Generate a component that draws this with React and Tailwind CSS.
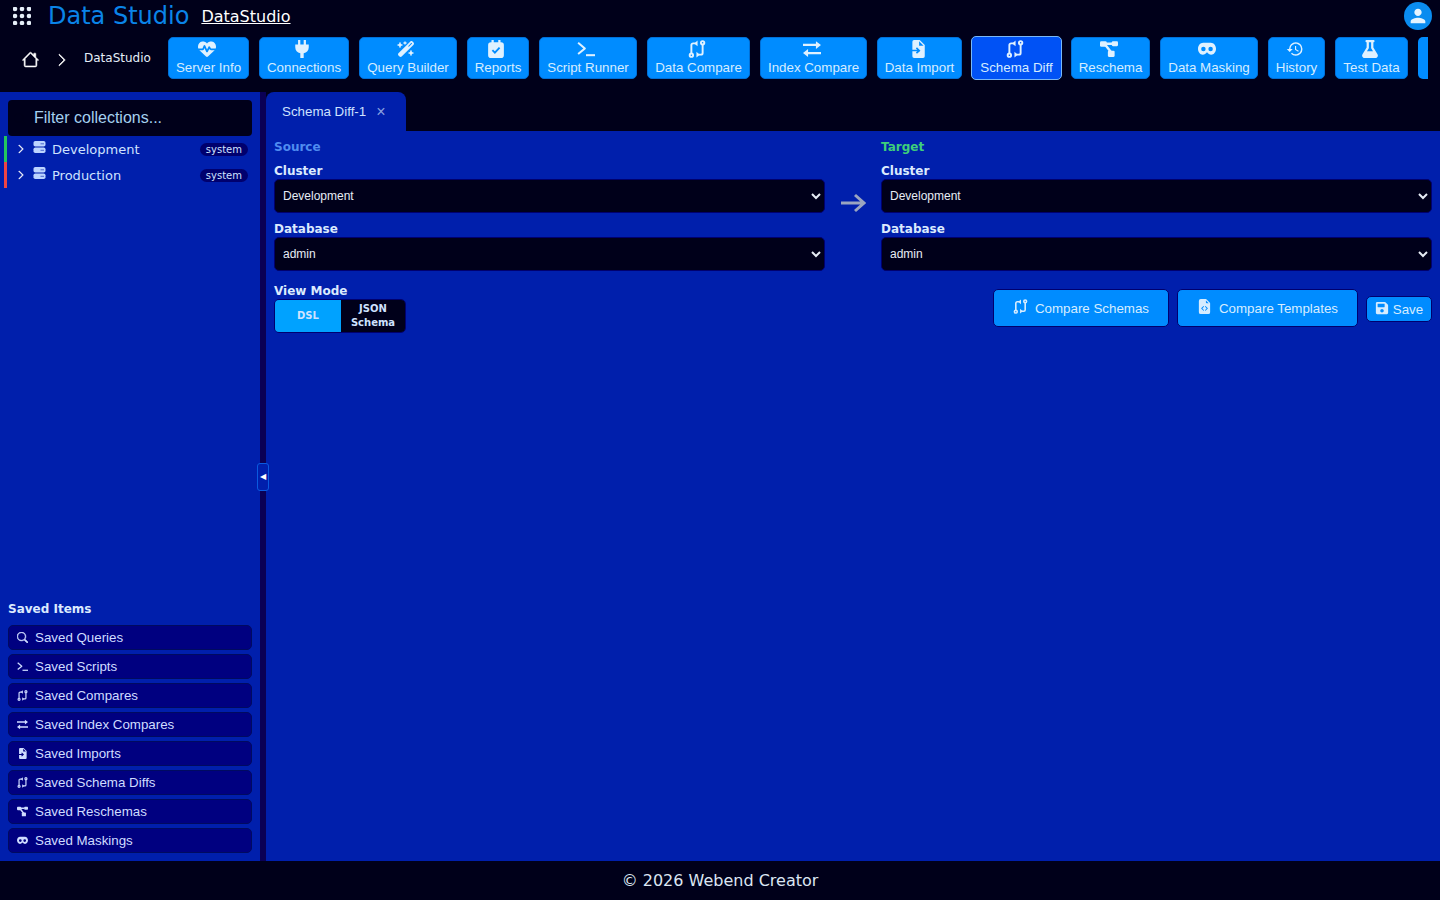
import React from "react";
import { BsFileEarmarkCodeFill, BsHouse, BsChevronRight, BsSearch } from "react-icons/bs";
import { MdHistory, MdPerson } from "react-icons/md";
import { FaFlask, FaSave } from "react-icons/fa";
import { FaHeartPulse, FaWandMagicSparkles } from "react-icons/fa6";

const Terminal = ({ className }) => (
  <svg viewBox="0 0 16 16" fill="none" stroke="currentColor" strokeWidth="1.800" className={className}><path d="M1 2.500 7 7.500l-6 5" strokeLinejoin="round" /><path d="M8 13.500h8" /></svg>
);
const GitDiff = ({ className }) => (
  <svg viewBox="0 0 16 16" fill="none" stroke="currentColor" strokeWidth="1.700" className={className}>
    <circle cx="13" cy="2.500" r="1.500" /><circle cx="3" cy="13.500" r="1.500" />
    <path d="M13 4v7.500c0 .8-.7 1.500-1.500 1.500H9" /><path d="M3 12V4.500C3 3.700 3.700 3 4.500 3H7" />
    <path d="M8.500.500v5L5.500 3z" fill="currentColor" stroke="none" /><path d="M7.500 10.500v5l3-2.500z" fill="currentColor" stroke="none" />
  </svg>
);
const Swap = ({ className }) => (
  <svg viewBox="0 0 16 16" fill="currentColor" className={className}><path d="M0 3.400h11.500V1L16 4.400 11.500 8V5.400H0zM16 10.600v2H4.500V15L0 11.600 4.500 8v2.600z" /></svg>
);
const FileImport = ({ className }) => (
  <svg viewBox="0 0 16 16" fill="currentColor" className={className}><path fillRule="evenodd" d="M4.500 0h5L14 4.500v10a1.500 1.500 0 0 1-1.500 1.500h-8A1.500 1.500 0 0 1 3 14.500V10h4.300l-1.200 1.200 1 1 3.100-2.700-3.100-3-1 1 1.200 1.200H3V1.500A1.500 1.500 0 0 1 4.500 0zM9 1v4h4z" /></svg>
);
const Schema = ({ className }) => (
  <svg viewBox="0 0 16 16" fill="currentColor" className={className}><rect x="0" y="1" width="6" height="5" rx="1.200" /><rect x="10.500" y="1" width="5.500" height="4.500" rx="1" /><rect x="7" y="9.500" width="6" height="5.500" rx="1" /><path d="M5 2.300h6v2.200H5zM4 5l1.700-1.300 5 6.500L9 11.500z" /></svg>
);
const Mask = ({ className }) => (
  <svg viewBox="0 0 16 16" fill="currentColor" className={className}><path fillRule="evenodd" d="M4.500 2.500h7C14 2.500 16 5 16 7.700S14.200 13 11.700 13c-1.500 0-2.500-.9-3.700-2.100C6.800 12.100 5.800 13 4.300 13 1.800 13 0 10.400 0 7.700S2 2.500 4.500 2.500zM4.800 6a2 2 0 1 0 0 4 2 2 0 0 0 0-4zm6.400 0a2 2 0 1 0 0 4 2 2 0 0 0 0-4z" /></svg>
);
const Plug = ({ className }) => (
  <svg viewBox="0 0 16 16" fill="currentColor" className={className}><path d="M4.500 0h2v4h3V0h2v4H14v2.500c0 2.800-1.800 4.700-4.500 5.300V16h-3v-4.200C3.800 11.200 2 9.300 2 6.500V4h2.500z" /></svg>
);
const CalendarCheck = ({ className }) => (
  <svg viewBox="0 0 16 16" className={className}>
    <path fill="currentColor" d="M4 0h2v2h4V0h2v2h.5A2.500 2.500 0 0 1 15 4.500v9a2.500 2.500 0 0 1-2.500 2.500h-9A2.500 2.500 0 0 1 1 13.500v-9A2.500 2.500 0 0 1 3.500 2H4z" />
    <path fill="none" stroke="#008cff" strokeWidth="1.600" d="m4.800 9 2.200 2.300 4.200-4.600" />
  </svg>
);
const Server = ({ className }) => (
  <svg viewBox="0 0 12 12" className={className}>
    <rect x="0" y="0" width="12" height="5.500" rx="1.800" fill="currentColor" />
    <rect x="0" y="6.500" width="12" height="5.500" rx="1.800" fill="currentColor" />
    <rect x="7" y="2.300" width="3.500" height="1" fill="#001fac" opacity="0.600" />
    <rect x="7" y="8.800" width="3.500" height="1" fill="#001fac" opacity="0.600" />
  </svg>
);

const nav = [
  ["Server Info", FaHeartPulse, "w-[81px]"],
  ["Connections", Plug, "w-[90px]"],
  ["Query Builder", FaWandMagicSparkles, "w-[98px]"],
  ["Reports", CalendarCheck, "w-[62px]"],
  ["Script Runner", Terminal, "w-[98px]"],
  ["Data Compare", GitDiff, "w-[103px]"],
  ["Index Compare", Swap, "w-[107px]"],
  ["Data Import", FileImport, "w-[85px]"],
  ["Schema Diff", GitDiff, "w-[91px]", true],
  ["Reschema", Schema, "w-[79px]"],
  ["Data Masking", Mask, "w-[98px]"],
  ["History", MdHistory, "w-[57px]"],
  ["Test Data", FaFlask, "w-[73px]"],
];

const saved = [
  ["Saved Queries", BsSearch],
  ["Saved Scripts", Terminal],
  ["Saved Compares", GitDiff],
  ["Saved Index Compares", Swap],
  ["Saved Imports", FileImport],
  ["Saved Schema Diffs", GitDiff],
  ["Saved Reschemas", Schema],
  ["Saved Maskings", Mask],
];

const sans = "font-['Liberation_Sans',sans-serif]";
const deja = "font-['DejaVu_Sans',sans-serif]";

function Field({ label, value }) {
  return (
    <div className="flex flex-col">
      <label className="text-xs leading-4 font-bold text-[#dbeafe]">{label}</label>
      <select className={`h-[34px] w-full rounded-[5px] border border-[#00006e] bg-[#00001a] pl-[4px] pr-[4px] text-xs text-[#e6ecf5] ${sans}`} defaultValue={value}>
        <option>{value}</option>
      </select>
    </div>
  );
}

export default function App() {
  return (
    <div className={`flex h-[900px] w-[1440px] flex-col overflow-hidden bg-[#00001a] text-white ${deja}`}>
      <header className="flex h-[32px] shrink-0 items-center pl-[13px] pr-[8px]">
        <svg viewBox="0 0 18 18" fill="#e5eef8" className="h-[18px] w-[18px]">
          {[2, 9, 16].flatMap((y) => [2, 9, 16].map((x) => <circle key={`${x}-${y}`} cx={x} cy={y} r="2.300" />))}
        </svg>
        <span className="ml-[17px] text-2xl leading-8 text-[#0a84e8]">Data Studio</span>
        <span className="ml-[12px] pt-[1px] text-base leading-6 text-white underline">DataStudio</span>
        <span className="ml-auto flex h-[28px] w-[28px] items-center justify-center rounded-full bg-[#0a8cf0] text-[#e6f4ff]">
          <MdPerson className="h-[22px] w-[22px]" />
        </span>
      </header>

      <nav className="flex h-[60px] shrink-0 items-start">
        <div className="flex h-[52px] w-[168px] shrink-0 items-center pl-[22px] text-xs">
          <BsHouse className="mt-[3px] h-[17px] w-[17px]" strokeWidth="0.500" />
          <BsChevronRight className="ml-[16px] mt-[3px] h-[14px] w-[14px]" strokeWidth="0.800" />
          <span className="ml-[15px] text-[#e5eef8]">DataStudio</span>
        </div>
        <div className={`mt-[4px] flex h-[44px] w-[1260px] items-center gap-[10px] overflow-hidden ${sans}`}>
          {nav.map(([label, Icon, w, active]) => (
            <button
              key={label}
              className={`flex shrink-0 flex-col items-center rounded-[5px] text-[13.333px] leading-4 text-[#d6ecff] ${w} ${
                active
                  ? "-mx-[1px] h-[44px] justify-center border border-[#7ab8f5] bg-[#0052f5]"
                  : "h-[42px] border border-[#0070d8] bg-[#008cff] pt-[2px]"
              }`}
            >
              <Icon className="mb-[2px] mr-[4px] h-[18px] w-[18px] shrink-0 text-[#dff1ff]" />
              <span className="whitespace-nowrap">{label}</span>
            </button>
          ))}
          <div className="h-[42px] w-[30px] shrink-0 rounded-l-[5px] bg-[#008cff]" />
        </div>
      </nav>

      <div className="flex min-h-0 flex-1">
        <aside className="flex w-[260px] shrink-0 flex-col bg-[#001fac] pt-[8px]">
          <div className={`relative mx-[8px] flex h-[36px] items-center rounded-[4px] bg-[#00001a] pl-[26px] text-base text-[#a5d0f0] ${sans}`}>
            <BsSearch className="absolute left-[6px] top-[13px] h-[12px] w-[12px] text-[#00001a]" />
            Filter collections...
          </div>
          {[["Development", "bg-[#22c55e]"], ["Production", "bg-[#ef4444]"]].map(([name, color]) => (
            <div key={name} className="relative ml-[4px] mr-[12px] flex h-[26px] items-center pl-[12px] text-[13px] text-[#cfe2ff]">
              <span className={`absolute left-0 top-0 h-full w-[3px] ${color}`} />
              <BsChevronRight className="h-[10px] w-[10px] text-white" strokeWidth="1" />
              <Server className="ml-[7px] -mt-[4px] h-[12px] w-[13px] text-[#bcd4ff]" />
              <span className="ml-[6px] pt-[1px]">{name}</span>
              <span className="ml-auto rounded-full bg-[#00006e] px-[6px] text-[10px] leading-[13px] text-[#cfe2ff]">system</span>
            </div>
          ))}
          <div className="mt-auto px-[8px] pb-[8px]">
            <div className="mb-[8px] text-xs leading-[15px] font-bold text-[#dbeafe]">Saved Items</div>
            <div className="flex flex-col gap-[4px]">
              {saved.map(([label, Icon]) => (
                <div key={label} className={`flex h-[25px] items-center rounded-[5px] border border-[#000a60] bg-[#000080] pl-[8px] text-[13.333px] text-[#cfdcff] ${sans}`}>
                  <Icon className="h-[11px] w-[11px] shrink-0" strokeWidth={Icon === BsSearch ? "0.800" : undefined} />
                  <span className="ml-[7px]">{label}</span>
                </div>
              ))}
            </div>
          </div>
        </aside>

        <div className="w-[6px] shrink-0 bg-[#0a0055]" />

        <main className="relative flex min-w-0 flex-1 flex-col">
          <button className="absolute -left-[9px] top-[371px] flex h-[28px] w-[12px] items-center justify-center rounded-[3px] border border-[#0a5ae0] bg-[#001fac] text-[8px] text-white">◀</button>
          <div className="flex h-[39px] shrink-0 bg-[#00001a]">
            <div className={`flex w-[140px] items-center rounded-t-[8px] bg-[#001fac] pl-[16px] text-[13.333px] text-[#cfe2ff] ${sans}`}>
              Schema Diff-1
              <span className="ml-[10px] text-base leading-4 text-[#8aa0e0]">×</span>
            </div>
          </div>
          <div className="flex-1 bg-[#001fac] px-[8px] pt-[9px]">
            <div className="flex">
              <div className="flex w-[551px] flex-col">
                <div className="mb-[8px] text-xs leading-[15px] font-bold text-[#4f8cf0]">Source</div>
                <div className="flex flex-col gap-[8px]">
                  <Field label="Cluster" value="Development" />
                  <Field label="Database" value="admin" />
                </div>
              </div>
              <div className="flex w-[56px] items-start justify-center pt-[53px]">
                <svg viewBox="0 0 26 20" fill="none" stroke="#9aa5c0" strokeWidth="3" className="h-[20px] w-[26px]"><path d="M1 10h23M15 2l9 8-9 8" /></svg>
              </div>
              <div className="flex w-[551px] flex-col">
                <div className="mb-[8px] text-xs leading-[15px] font-bold text-[#3ecf7a]">Target</div>
                <div className="flex flex-col gap-[8px]">
                  <Field label="Cluster" value="Development" />
                  <Field label="Database" value="admin" />
                </div>
              </div>
            </div>
            <div className="mt-[12px] flex items-start justify-between">
              <div>
                <div className="text-xs leading-4 font-bold text-[#dbeafe]">View Mode</div>
                <div className="flex h-[34px] w-[132px] overflow-hidden rounded-[5px] border border-[#00006e] text-[10px] leading-[14px] font-bold text-[#cfe2ff]">
                  <span className="flex w-[66px] items-center justify-center bg-[#00a2ff]">DSL</span>
                  <span className="flex flex-1 items-center justify-center bg-[#00001a] text-center">JSON<br />Schema</span>
                </div>
              </div>
              <div className={`mt-[6px] flex items-center text-[13.333px] text-[#d6ecff] ${sans}`}>
                <button className="flex h-[38px] w-[176px] items-center justify-center rounded-[5px] border border-[#00006e] bg-[#008cff] pt-[2px]">
                  <GitDiff className="mb-[6px] h-[15px] w-[15px]" /><span className="ml-[7px]">Compare Schemas</span>
                </button>
                <button className="ml-[8px] flex h-[38px] w-[181px] items-center justify-center rounded-[5px] border border-[#00006e] bg-[#008cff] pt-[2px]">
                  <BsFileEarmarkCodeFill className="mb-[6px] h-[15px] w-[15px]" /><span className="ml-[7px]">Compare Templates</span>
                </button>
                <button className="ml-[8px] mt-[2px] flex h-[26px] w-[66px] items-center justify-center rounded-[5px] border border-[#00006e] bg-[#008cff] pt-[2px]">
                  <FaSave className="mb-[4px] h-[14px] w-[14px]" /><span className="ml-[4px]">Save</span>
                </button>
              </div>
            </div>
          </div>
        </main>
      </div>

      <footer className="flex h-[39px] shrink-0 items-center justify-center text-base text-[#dce6f2]">© 2026 Webend Creator</footer>
    </div>
  );
}
